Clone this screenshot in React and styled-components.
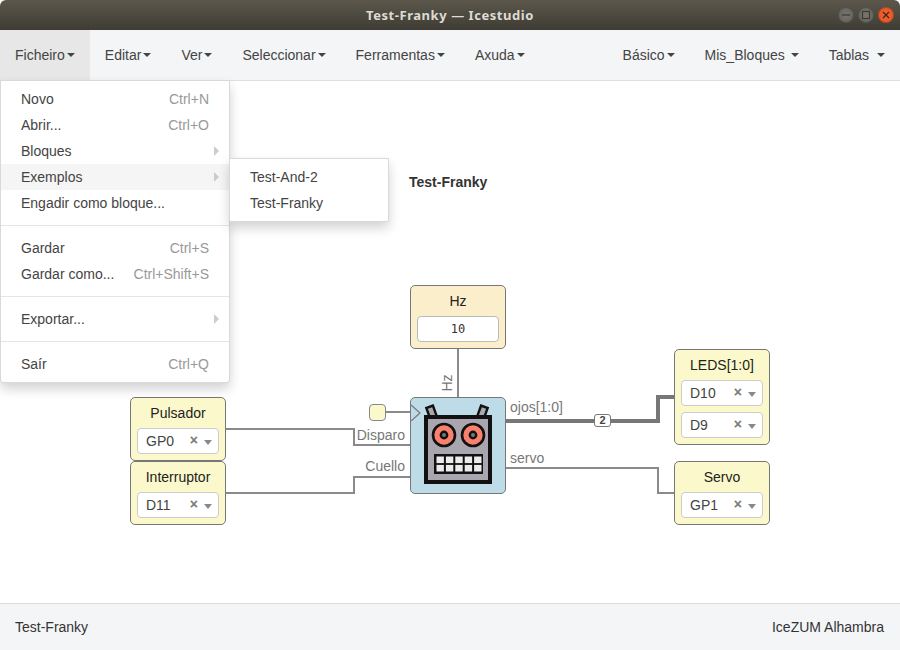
import React from 'react';
import styled, { createGlobalStyle } from 'styled-components';

const GlobalStyle = createGlobalStyle`
  html, body {
    margin: 0;
    padding: 0;
    background: #3f3d35;
  }
  body {
    font-family: "Liberation Sans", Arial, sans-serif;
    font-size: 14px;
    color: #333;
  }
`;

const Window = styled.div`
  width: 900px;
  height: 650px;
  display: flex;
  flex-direction: column;
  overflow: hidden;
  background: #fff;
`;

const TitleBar = styled.header`
  position: relative;
  height: 30px;
  flex: none;
  display: flex;
  align-items: center;
  justify-content: center;
  background: linear-gradient(#5b574b, #3e3c34);
  border-radius: 6px 6px 0 0;
  color: #dfdbd2;
  font-family: "Noto Sans", sans-serif;
  font-weight: 700;
  font-size: 13px;
  letter-spacing: 0.55px;
`;

const WindowButtons = styled.div`
  position: absolute;
  right: 6px;
  top: 7px;
  display: flex;
  gap: 4px;
`;

const WindowButton = styled.div`
  width: 16px;
  height: 16px;
  border-radius: 50%;
  display: flex;
  align-items: center;
  justify-content: center;
  background: ${(p) => (p.$close ? 'radial-gradient(#f0683a, #df4f1c)' : 'radial-gradient(#77756d, #5f5d55)')};
  box-shadow: inset 0 0 0 1px rgba(0, 0, 0, 0.2);
`;

const MenuBar = styled.nav`
  position: relative;
  height: 50px;
  flex: none;
  display: flex;
  justify-content: space-between;
  background: #f4f5f7;
  border-bottom: 1px solid #dadfe3;
  z-index: 5;
`;

const MenuGroup = styled.div`
  display: flex;
`;

const MenuItem = styled.div`
  display: flex;
  align-items: center;
  padding: 0 15px;
  color: #444;
  white-space: pre;
  background: ${(p) => (p.$open ? '#e7e7e7' : 'transparent')};
`;

const Caret = styled.span`
  width: 0;
  height: 0;
  margin-left: ${(p) => p.$gap || 2}px;
  border-top: 4px solid #444;
  border-left: 4px solid transparent;
  border-right: 4px solid transparent;
`;

const Dropdown = styled.div`
  position: absolute;
  top: ${(p) => p.$top}px;
  left: ${(p) => p.$left}px;
  width: ${(p) => p.$width}px;
  box-sizing: border-box;
  padding: 5px 0;
  background: #fff;
  border: 1px solid rgba(0, 0, 0, 0.15);
  border-radius: ${(p) => (p.$sub ? '0 0 2px 2px' : '0 0 4px 4px')};
  box-shadow: 0 6px 12px rgba(0, 0, 0, 0.175);
`;

const DropdownRow = styled.div`
  height: 26px;
  box-sizing: border-box;
  padding: 0 20px;
  display: flex;
  align-items: center;
  justify-content: space-between;
  color: #444;
  white-space: nowrap;
  background: ${(p) => (p.$active ? '#f5f5f5' : 'transparent')};
`;

const Shortcut = styled.span`
  color: #999;
`;

const SubArrow = styled.span`
  width: 0;
  height: 0;
  margin-right: -10px;
  border-top: 5px solid transparent;
  border-bottom: 5px solid transparent;
  border-left: 5px solid #ccc;
`;

const Divider = styled.div`
  height: 1px;
  margin: 9px 0;
  background: #e5e5e5;
`;

const Canvas = styled.main`
  position: relative;
  flex: 1;
  background: #fff;
`;

const Wires = styled.svg`
  position: absolute;
  left: 0;
  top: 0;
`;

const DesignTitle = styled.div`
  position: absolute;
  left: 409px;
  top: 93px;
  font-weight: 700;
  color: #333;
`;

const Block = styled.div`
  position: absolute;
  left: ${(p) => p.$x}px;
  top: ${(p) => p.$y}px;
  width: 96px;
  height: ${(p) => p.$h}px;
  box-sizing: border-box;
  padding: 0 6px;
  border: 1px solid #777;
  border-radius: 5px;
  background: ${(p) => p.$bg};
  display: flex;
  flex-direction: column;
  gap: 6px;
`;

const BlockName = styled.div`
  height: 24px;
  line-height: 30px;
  text-align: center;
  color: #222;
  white-space: nowrap;
`;

const Select = styled.div`
  height: 26px;
  box-sizing: border-box;
  border: 1px solid #ccc;
  border-radius: 4px;
  background: #fff;
  display: flex;
  align-items: center;
  padding: 0 6px 0 8px;
  color: #444;
`;

const SelectValue = styled.span`
  flex: 1;
`;

const Clear = styled.span`
  color: #777;
  font-size: 14px;
  font-weight: 700;
  line-height: 14px;
  margin: -2px 6px 0 0;
`;

const SelectCaret = styled.span`
  width: 0;
  height: 0;
  margin-top: 2px;
  border-top: 5px solid #888;
  border-left: 4px solid transparent;
  border-right: 4px solid transparent;
`;

const ConstantInput = styled.div`
  height: 26px;
  box-sizing: border-box;
  border: 1px solid #bbb;
  border-radius: 4px;
  background: #fff;
  display: flex;
  align-items: center;
  justify-content: center;
  color: #333;
  font-family: "DejaVu Sans Mono", monospace;
  font-size: 12px;
`;

const RobotBlock = styled.div`
  position: absolute;
  left: 410px;
  top: 316px;
  width: 96px;
  height: 97px;
  box-sizing: border-box;
  border: 1px solid #777;
  border-radius: 5px;
  background: #bddce8;
`;

const ClockPin = styled.div`
  position: absolute;
  left: 369px;
  top: 323px;
  width: 17px;
  height: 17px;
  box-sizing: border-box;
  border: 1px solid #888;
  border-radius: 4px;
  background: #fbf9cc;
`;

const PortLabel = styled.span`
  position: absolute;
  top: ${(p) => p.$y}px;
  ${(p) => (p.$right !== undefined ? `right: ${p.$right}px;` : `left: ${p.$x}px;`)}
  line-height: 16px;
  color: #777;
  white-space: nowrap;
`;

const HzLabel = styled.span`
  position: absolute;
  left: 437px;
  top: 294px;
  width: 20px;
  line-height: 16px;
  text-align: center;
  color: #777;
  transform: rotate(-90deg);
`;

const BusBadge = styled.div`
  position: absolute;
  left: 594px;
  top: 333px;
  width: 17px;
  height: 13px;
  box-sizing: border-box;
  border: 1px solid #777;
  border-radius: 3px;
  background: #fff;
  color: #444;
  font-size: 11px;
  font-weight: 700;
  line-height: 11px;
  text-align: center;
`;

const Footer = styled.footer`
  height: 46px;
  flex: none;
  display: flex;
  align-items: center;
  justify-content: space-between;
  padding: 0 16px 0 15px;
  background: #f4f5f7;
  border-top: 1px solid #dadcdf;
  color: #333;
`;

const RobotIcon = () => (
  <svg width="94" height="95" viewBox="0 0 94 95" style={{ display: 'block' }}>
    <path d="M0 7 L9 15 L0 23" fill="none" stroke="#777" strokeWidth="1.2" />
    <rect x="17" y="8.5" width="7" height="11" fill="#a9a6b0" stroke="#111" strokeWidth="2.4" transform="rotate(-20 20.5 14)" />
    <rect x="68" y="8.5" width="7" height="11" fill="#a9a6b0" stroke="#111" strokeWidth="2.4" transform="rotate(20 71.5 14)" />
    <rect x="15" y="19" width="64" height="65" fill="#a9a6b0" stroke="#111" strokeWidth="4" />
    <circle cx="33" cy="37" r="11" fill="#f9806c" stroke="#111" strokeWidth="2.6" />
    <circle cx="62" cy="37" r="11" fill="#f9806c" stroke="#111" strokeWidth="2.6" />
    <circle cx="33" cy="37" r="3.2" fill="#777" stroke="#111" strokeWidth="2.4" />
    <circle cx="62" cy="37" r="3.2" fill="#777" stroke="#111" strokeWidth="2.4" />
    <rect x="23" y="56" width="49" height="20" fill="#111" />
    {[0, 1, 2, 3, 4].map((c) =>
      [0, 1].map((r) => (
        <rect key={`${c}-${r}`} x={25.5 + c * 9.4} y={58.5 + r * 8.4} width="7.4" height="6.6" fill="#ececec" />
      ))
    )}
  </svg>
);

const PinSelect = ({ value }) => (
  <Select>
    <SelectValue>{value}</SelectValue>
    <Clear>×</Clear>
    <SelectCaret />
  </Select>
);

const IoBlock = ({ x, y, h, name, pins }) => (
  <Block $x={x} $y={y} $h={h} $bg="#fbf9cc">
    <BlockName>{name}</BlockName>
    {pins.map((pin) => (
      <PinSelect key={pin} value={pin} />
    ))}
  </Block>
);

const leftMenus = ['Ficheiro', 'Editar', 'Ver', 'Seleccionar', 'Ferramentas', 'Axuda'];

export default function App() {
  return (
    <Window>
      <GlobalStyle />
      <TitleBar>
        Test-Franky — Icestudio
        <WindowButtons>
          <WindowButton>
            <svg width="10" height="10" viewBox="0 0 10 10">
              <path d="M1 5 H9" stroke="#3a3a36" strokeWidth="1.2" />
            </svg>
          </WindowButton>
          <WindowButton>
            <svg width="10" height="10" viewBox="0 0 10 10">
              <rect x="1.5" y="1.5" width="7" height="7" fill="none" stroke="#3a3a36" strokeWidth="1.1" />
            </svg>
          </WindowButton>
          <WindowButton $close>
            <svg width="10" height="10" viewBox="0 0 10 10">
              <path d="M2 2 L8 8 M8 2 L2 8" stroke="#4a2010" strokeWidth="1.3" />
            </svg>
          </WindowButton>
        </WindowButtons>
      </TitleBar>

      <MenuBar>
        <MenuGroup>
          {leftMenus.map((m, i) => (
            <MenuItem key={m} $open={i === 0}>
              {m}
              <Caret />
            </MenuItem>
          ))}
        </MenuGroup>
        <MenuGroup>
          <MenuItem>
            Básico
            <Caret />
          </MenuItem>
          <MenuItem>
            {'Mis_Bloques '}
            <Caret />
          </MenuItem>
          <MenuItem>
            {'Tablas '}
            <Caret $gap={4} />
          </MenuItem>
        </MenuGroup>

        <Dropdown $top={50} $left={0} $width={230}>
          <DropdownRow>
            Novo<Shortcut>Ctrl+N</Shortcut>
          </DropdownRow>
          <DropdownRow>
            Abrir...<Shortcut>Ctrl+O</Shortcut>
          </DropdownRow>
          <DropdownRow>
            Bloques<SubArrow />
          </DropdownRow>
          <DropdownRow $active>
            Exemplos<SubArrow />
          </DropdownRow>
          <DropdownRow>Engadir como bloque...</DropdownRow>
          <Divider />
          <DropdownRow>
            Gardar<Shortcut>Ctrl+S</Shortcut>
          </DropdownRow>
          <DropdownRow>
            Gardar como...<Shortcut>Ctrl+Shift+S</Shortcut>
          </DropdownRow>
          <Divider />
          <DropdownRow>
            Exportar...<SubArrow />
          </DropdownRow>
          <Divider />
          <DropdownRow>
            Saír<Shortcut>Ctrl+Q</Shortcut>
          </DropdownRow>
        </Dropdown>

        <Dropdown $sub $top={128} $left={229} $width={160}>
          <DropdownRow>Test-And-2</DropdownRow>
          <DropdownRow>Test-Franky</DropdownRow>
        </Dropdown>
      </MenuBar>

      <Canvas>
        <Wires width="900" height="522" viewBox="0 0 900 522">
          <g fill="none" stroke="#8a8a8a" strokeWidth="2">
            <path d="M226 348 H354 V364 H410" />
            <path d="M226 412 H354 V396 H410" />
            <path d="M458 268 V316" />
            <path d="M386 331 H410" />
            <path d="M506 387 H658 V412 H674" />
          </g>
          <path d="M506 340 H658 V316 H674" fill="none" stroke="#777" strokeWidth="4" />
        </Wires>

        <DesignTitle>Test-Franky</DesignTitle>

        <Block $x={410} $y={204} $h={64} $bg="#fbeecb">
          <BlockName>Hz</BlockName>
          <ConstantInput>10</ConstantInput>
        </Block>

        <IoBlock x={130} y={316} h={64} name="Pulsador" pins={['GP0']} />
        <IoBlock x={130} y={380} h={64} name="Interruptor" pins={['D11']} />
        <IoBlock x={674} y={268} h={96} name="LEDS[1:0]" pins={['D10', 'D9']} />
        <IoBlock x={674} y={380} h={64} name="Servo" pins={['GP1']} />

        <ClockPin />
        <RobotBlock>
          <RobotIcon />
        </RobotBlock>

        <HzLabel>Hz</HzLabel>
        <PortLabel $right={495} $y={346}>Disparo</PortLabel>
        <PortLabel $right={495} $y={377}>Cuello</PortLabel>
        <PortLabel $x={510} $y={318}>ojos[1:0]</PortLabel>
        <PortLabel $x={510} $y={369}>servo</PortLabel>
        <BusBadge>2</BusBadge>
      </Canvas>

      <Footer>
        <span>Test-Franky</span>
        <span>IceZUM Alhambra</span>
      </Footer>
    </Window>
  );
}
